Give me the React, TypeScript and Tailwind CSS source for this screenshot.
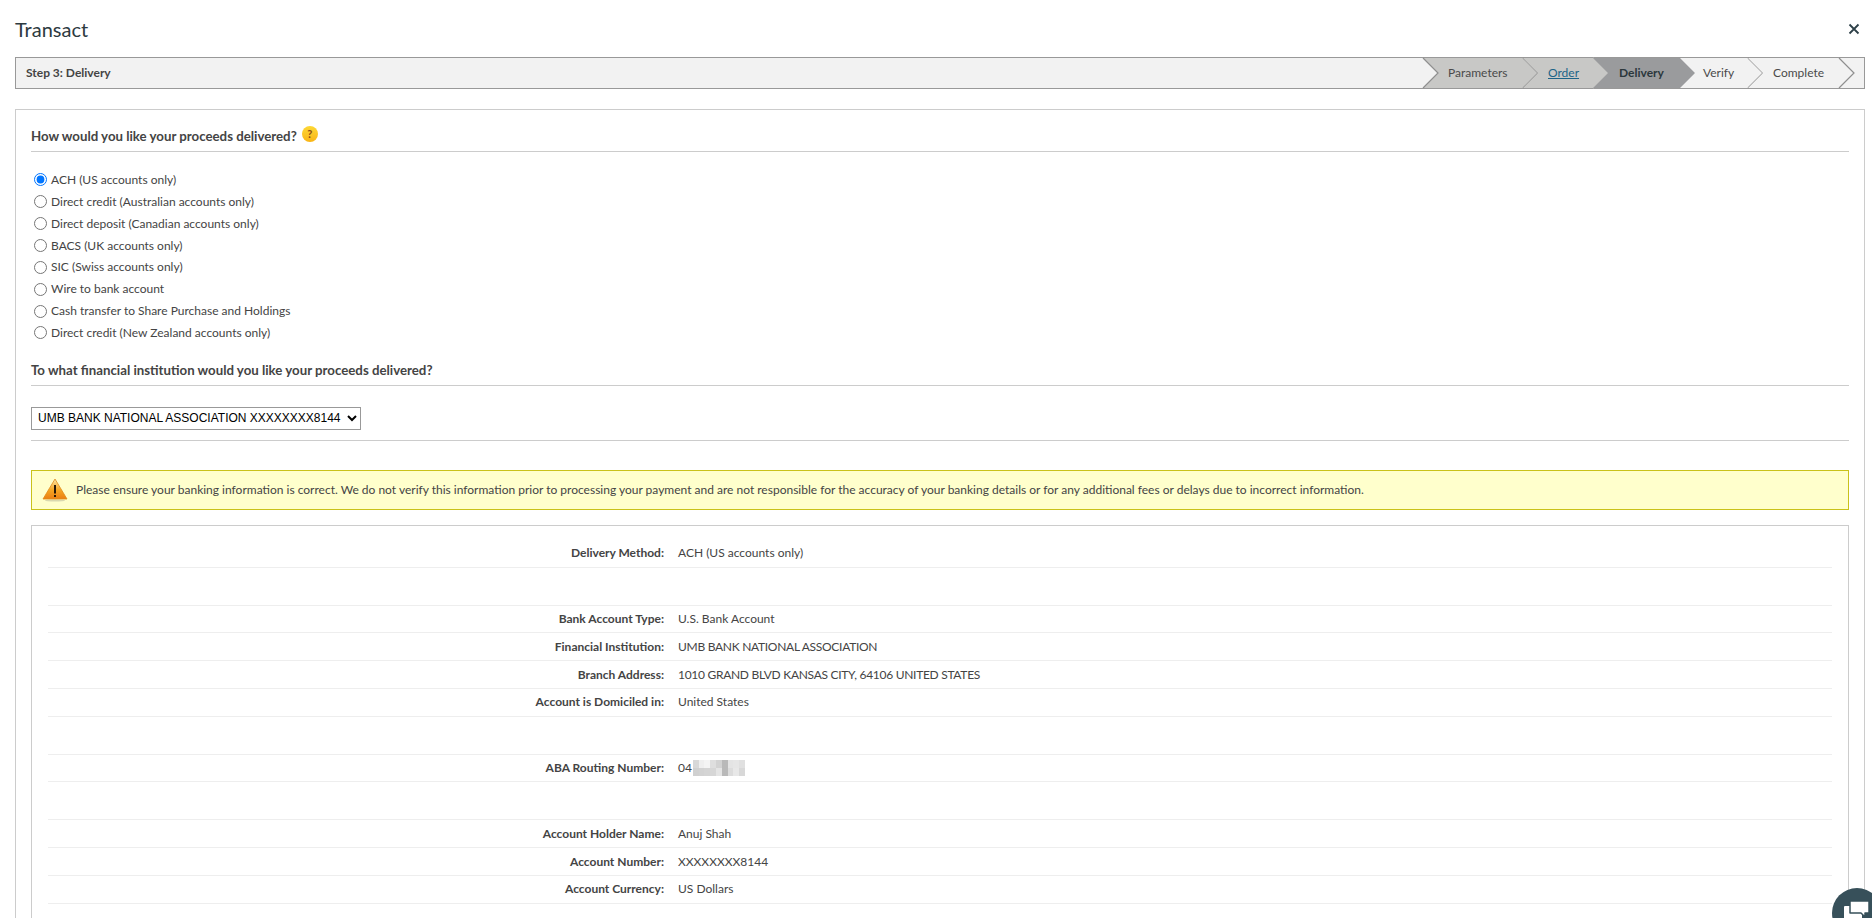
const steps = [
  { label: 'Parameters', width: 'w-[100px]', fill: '#c8c8c6', stroke: '#8f8f8f', w: 100, text: 'text-[#4a4a4a]', pad: 'pl-[25px]', lead: true },
  { label: 'Order', width: 'w-[70px]', fill: '#c8c8c6', stroke: '#c8c8c6', w: 70, text: 'text-[#1c6488] underline', pad: 'pl-[25px]', lead: false },
  { label: 'Delivery', width: 'w-[87px]', fill: '#9a9b9d', stroke: '#9a9b9d', w: 87, text: 'text-[#2b373c] font-bold', pad: 'pl-[26px]', lead: false },
  { label: 'Verify', width: 'w-[68px]', fill: '#f2f2f2', stroke: '#8f8f8f', w: 68, text: 'text-[#4a4a4a]', pad: 'pl-[23px]', lead: false },
  { label: 'Complete', width: 'w-[91px]', fill: '#f2f2f2', stroke: '#8f8f8f', w: 91, text: 'text-[#4a4a4a]', pad: 'pl-[25px]', lead: false },
];

const methods = [
  'ACH (US accounts only)',
  'Direct credit (Australian accounts only)',
  'Direct deposit (Canadian accounts only)',
  'BACS (UK accounts only)',
  'SIC (Swiss accounts only)',
  'Wire to bank account',
  'Cash transfer to Share Purchase and Holdings',
  'Direct credit (New Zealand accounts only)',
];

// pixelated block hiding the routing number
const blurTop = ['bg-[#d8d8d8]', 'bg-[#efefef]', 'bg-[#f4f4f4]', 'bg-[#dedede]', 'bg-[#d2d2d2]', 'bg-[#b9b9b9]', 'bg-[#e4e4e4]', 'bg-[#e6e6e6]', 'bg-[#e0e0e0]'];
const blurBottom = ['bg-[#d0d0d0]', 'bg-[#d2d2d2]', 'bg-[#d4d4d4]', 'bg-[#d6d6d6]', 'bg-[#e4e4e4]', 'bg-[#b9b9b9]', 'bg-[#dcdcdc]', 'bg-[#e8e8e8]', 'bg-[#d8d8d8]'];

function StepArrow({ w, fill, stroke, lead }: { w: number; fill: string; stroke: string; lead: boolean }) {
  return (
    <svg className="absolute left-0 top-0 overflow-visible" width={w} height={30} viewBox={`0 0 ${w} 30`}>
      <polygon points={`0,0 ${w},0 ${w + 15},15 ${w},30 0,30 15,15`} fill={fill} />
      <polyline points={`${w},0 ${w + 15},15 ${w},30`} fill="none" stroke={stroke} strokeWidth="1.2" />
      {lead && <polyline points="0,0 15,15 0,30" fill="none" stroke="#8f8f8f" strokeWidth="1.2" />}
    </svg>
  );
}

function WarningIcon() {
  return (
    <svg width="26" height="24" viewBox="0 0 26 24" className="shrink-0">
      <defs>
        <linearGradient id="warn" x1="0" y1="0" x2="0" y2="1">
          <stop offset="0" stopColor="#fde8a8" />
          <stop offset="0.55" stopColor="#f6a623" />
          <stop offset="1" stopColor="#ea7f13" />
        </linearGradient>
      </defs>
      <ellipse cx="13" cy="22.5" rx="10" ry="1" fill="#d9d9b0" />
      <path d="M13 1 L25 21 H1 Z" fill="url(#warn)" stroke="#e08a1a" strokeWidth="0.8" strokeLinejoin="round" />
      <rect x="12" y="7" width="2" height="8.5" fill="#2a1a08" />
      <rect x="12" y="17" width="2" height="2" fill="#2a1a08" />
    </svg>
  );
}

function Row({ label, children }: { label: string; children: React.ReactNode }) {
  return (
    <div className="flex h-[27.75px] items-center border-b border-[#eeeeee]">
      <div className="w-[616px] text-right font-bold text-[#444444]">{label}</div>
      <div className="pl-[14px] text-[#444444]">{children}</div>
    </div>
  );
}

const Spacer = () => <div className="h-[38px] border-b border-[#eeeeee]" />;

export default function App() {
  return (
    <div className="relative h-screen overflow-hidden bg-white pl-[15px] pr-[7px] font-['Lato',sans-serif] text-[12px] text-[#444444]">
      <div className="flex h-[57px] items-center justify-between">
        <h1 className="text-[20px] text-[#2d3a40]">Transact</h1>
        <svg width="12" height="12" viewBox="0 0 12 12" className="mr-[5px]">
          <path d="M1.5 1.5 L10.5 10.5 M10.5 1.5 L1.5 10.5" stroke="#2d4048" strokeWidth="1.8" />
        </svg>
      </div>

      <div className="flex h-[32px] items-center justify-between border border-[#999999] bg-[#f2f2f2]">
        <div className="pl-[10px] font-bold text-[#444444]">Step 3: Delivery</div>
        <div className="flex h-full pr-[25px]">
          {steps.map((s) => (
            <div key={s.label} className={`relative h-full ${s.width}`}>
              <StepArrow w={s.w} fill={s.fill} stroke={s.stroke} lead={s.lead} />
              <div className={`relative flex h-full items-center ${s.pad} ${s.text}`}>{s.label}</div>
            </div>
          ))}
        </div>
      </div>

      <div className="mt-[20px] border border-[#cccccc] px-[15px] pb-[40px]">
        <div className="flex h-[42px] items-end border-b border-[#cccccc] pb-[4px]">
          <span className="text-[13.25px] font-bold text-[#444444]">How would you like your proceeds delivered?</span>
          <span className="mb-[5px] ml-[5px] flex h-[16px] w-[16px] items-center justify-center rounded-full bg-gradient-to-b from-[#fdd835] to-[#f9b413] text-[11px] font-bold text-[#8a4b14]">?</span>
        </div>

        <div className="mt-[17px]">
          {methods.map((m, i) => (
            <label key={m} className="flex h-[21.86px] items-center">
              <input type="radio" name="method" defaultChecked={i === 0} className="ml-[3px] mr-[4px] h-[13px] w-[13px]" />
              <span>{m}</span>
            </label>
          ))}
        </div>

        <div className="mt-[16px] border-b border-[#cccccc] pb-[5px] text-[13.25px] font-bold leading-[20px] text-[#444444]">
          To what financial institution would you like your proceeds delivered?
        </div>

        <div className="border-b border-[#cccccc] pb-[10px] pt-[21px]">
          <select className="block h-[23px] w-[330px] border border-[#999999] bg-white pl-[2px] font-['Liberation_Sans',sans-serif] text-[12px] text-black">
            <option>UMB BANK NATIONAL ASSOCIATION XXXXXXXX8144</option>
          </select>
        </div>

        <div className="mt-[29px] flex h-[40px] items-center border border-[#c9c21a] bg-[#ffffcc] pl-[10px]">
          <WarningIcon />
          <span className="ml-[8px]">
            Please ensure your banking information is correct. We do not verify this information prior to processing your payment and are not responsible for the accuracy of your banking details or for any additional fees or delays due to incorrect information.
          </span>
        </div>

        <div className="mt-[15px] border border-[#cccccc] px-[16px] pb-[40px] pt-[14px]">
          <Row label="Delivery Method:">ACH (US accounts only)</Row>
          <Spacer />
          <Row label="Bank Account Type:">U.S. Bank Account</Row>
          <Row label="Financial Institution:">
            <span className="tracking-[-0.29px]">UMB BANK NATIONAL ASSOCIATION</span>
          </Row>
          <Row label="Branch Address:">
            <span className="tracking-[-0.29px]">1010 GRAND BLVD KANSAS CITY, 64106 UNITED STATES</span>
          </Row>
          <Row label="Account is Domiciled in:">United States</Row>
          <Spacer />
          <Row label="ABA Routing Number:">
            <span className="flex items-center">
              04
              <span className="ml-[1px] grid h-[16px] w-[52px] grid-cols-9">
                {[...blurTop, ...blurBottom].map((c, i) => (
                  <span key={i} className={c} />
                ))}
              </span>
            </span>
          </Row>
          <Spacer />
          <Row label="Account Holder Name:">Anuj Shah</Row>
          <Row label="Account Number:">XXXXXXXX8144</Row>
          <Row label="Account Currency:">US Dollars</Row>
        </div>
      </div>

      <div className="absolute bottom-[-20px] right-[-10px] h-[50px] w-[50px] overflow-hidden rounded-full bg-[#37505a]">
        <svg width="50" height="50" viewBox="0 0 50 50">
          <rect x="12" y="18" width="18" height="14" rx="1" fill="#ffffff" />
          <path d="M18 13 H37 V25 H33 V29 L29 25 H18 Z" fill="#ffffff" stroke="#37505a" strokeWidth="1.5" strokeLinejoin="round" />
        </svg>
      </div>
    </div>
  );
}
